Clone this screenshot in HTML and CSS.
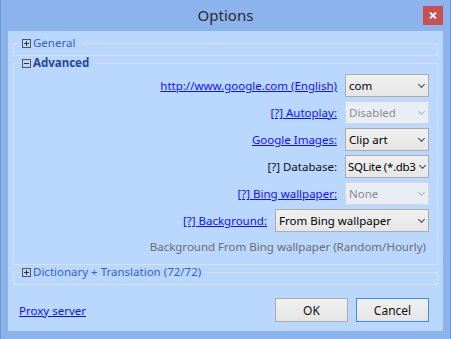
FILE: index.html
```html
<!DOCTYPE html>
<html lang="en">
<head>
    <meta charset="UTF-8">
    <title>Options</title>
    <link rel="stylesheet" href="styles.css">
</head>
<body>
    <div class="window">
        <div class="titlebar">
            <span class="title">Options</span>
            <button class="close-btn" aria-label="Close">
                <svg width="8" height="7" viewBox="0 0 8 7"><path d="M1 0.5 L7 6.5 M7 0.5 L1 6.5" stroke="#fff" stroke-width="1.8"/></svg>
            </button>
        </div>

        <div class="content">
            <fieldset class="group collapsed">
                <legend>
                    <svg class="toggle" width="9" height="9" viewBox="0 0 9 9"><rect x="0.5" y="0.5" width="8" height="8" fill="none" stroke="#555"/><path d="M2 4.5 H7 M4.5 2 V7" stroke="#333"/></svg>
                    <span class="group-name">General</span>
                </legend>
            </fieldset>

            <fieldset class="group open">
                <legend>
                    <svg class="toggle" width="9" height="9" viewBox="0 0 9 9"><rect x="0.5" y="0.5" width="8" height="8" fill="none" stroke="#555"/><path d="M2 4.5 H7" stroke="#333"/></svg>
                    <span class="group-name bold">Advanced</span>
                </legend>

                <div class="rows">
                    <div class="row">
                        <a href="#" class="label-link">http://www.google.com (English)</a>
                        <div class="select small"><span>com</span><i class="arrow"></i></div>
                    </div>
                    <div class="row">
                        <a href="#" class="label-link">[?] Autoplay:</a>
                        <div class="select small disabled"><span>Disabled</span><i class="arrow"></i></div>
                    </div>
                    <div class="row">
                        <a href="#" class="label-link">Google Images:</a>
                        <div class="select small"><span>Clip art</span><i class="arrow"></i></div>
                    </div>
                    <div class="row">
                        <span class="label">[?] Database:</span>
                        <div class="select small tight"><span>SQLite (*.db3</span><i class="arrow"></i></div>
                    </div>
                    <div class="row">
                        <a href="#" class="label-link">[?] Bing wallpaper:</a>
                        <div class="select small disabled"><span>None</span><i class="arrow"></i></div>
                    </div>
                    <div class="row">
                        <a href="#" class="label-link">[?] Background:</a>
                        <div class="select wide"><span>From Bing wallpaper</span><i class="arrow"></i></div>
                    </div>
                </div>
                <p class="hint">Background From Bing wallpaper (Random/Hourly)</p>
            </fieldset>

            <fieldset class="group collapsed">
                <legend>
                    <svg class="toggle" width="9" height="9" viewBox="0 0 9 9"><rect x="0.5" y="0.5" width="8" height="8" fill="none" stroke="#555"/><path d="M2 4.5 H7 M4.5 2 V7" stroke="#333"/></svg>
                    <span class="group-name">Dictionary + Translation (72/72)</span>
                </legend>
            </fieldset>

            <div class="footer">
                <a href="#" class="proxy">Proxy server</a>
                <div class="buttons">
                    <button class="btn">OK</button>
                    <button class="btn focused">Cancel</button>
                </div>
            </div>
        </div>
    </div>
</body>
</html>
```

FILE: styles.css
```css
:root {
    --frame: #8cb3eb;
    --frame-edge: #6e97d3;
    --panel: #bad7fd;
    --group-line: #d9e2ea;
    --link: #1010ff;
    --header-blue: #3960c4;
    --header-dark: #28469e;
}

* {
    box-sizing: border-box;
    margin: 0;
    padding: 0;
}

body {
    font-family: "Noto Sans", "Open Sans", sans-serif;
    font-size: 11.5px;
    background: var(--frame);
    color: #111;
}

.window {
    width: 451px;
    height: 339px;
    background: var(--frame);
    border-left: 1px solid var(--frame-edge);
    border-right: 1px solid var(--frame-edge);
    display: flex;
    flex-direction: column;
    padding: 0 7px 8px;
}

.titlebar {
    height: 31px;
    display: flex;
    align-items: center;
    justify-content: center;
    position: relative;
}

.title {
    font-size: 15px;
    color: #2b2b2b;
    margin-top: -1px;
}

.close-btn {
    position: absolute;
    right: 0;
    top: 6px;
    width: 20px;
    height: 19px;
    border: none;
    background: #c75050;
    display: flex;
    align-items: center;
    justify-content: center;
}

.content {
    flex: 1;
    background: var(--panel);
    display: flex;
    flex-direction: column;
}

.group {
    margin: 0 5px;
    border: 1px solid var(--group-line);
    padding: 0 8px 5px;
}

.group:first-child {
    margin-top: 5px;
}

.group legend {
    display: flex;
    align-items: center;
    height: 14px;
    padding: 0 6px 0 0;
    line-height: 14px;
}

.toggle {
    display: block;
    margin-right: 2px;
}

.group-name {
    color: var(--header-blue);
}

.group-name.bold {
    font-weight: bold;
    color: var(--header-dark);
}

.rows {
    display: flex;
    flex-direction: column;
    gap: 4px;
    padding-top: 4px;
}

.row {
    display: flex;
    justify-content: flex-end;
    align-items: center;
    gap: 8px;
    height: 23px;
}

.label-link,
.proxy {
    color: var(--link);
    text-decoration: underline;
}

.label {
    color: #111;
}

.select {
    height: 23px;
    border: 1px solid #acacac;
    background: linear-gradient(#f0f0f0, #e6e6e6);
    display: flex;
    align-items: center;
    padding-left: 3px;
    overflow: hidden;
    color: #000;
    white-space: nowrap;
}

.select.small {
    width: 84px;
}

.select.wide {
    width: 154px;
}

.select span {
    flex: 1;
    overflow: hidden;
}

.select.tight {
    padding-left: 2px;
    letter-spacing: -0.3px;
}

.select.tight .arrow {
    width: 11px;
}

.select.disabled {
    background: #e9eef5;
    border-color: #d4d8dd;
    color: #8b8b8b;
}

.arrow {
    width: 13px;
    height: 21px;
    flex: none;
    display: flex;
    align-items: center;
    justify-content: center;
}

.arrow::after {
    content: "";
    width: 4px;
    height: 4px;
    border-right: 1.5px solid #444;
    border-bottom: 1.5px solid #444;
    transform: rotate(45deg);
    margin-top: -3px;
}

.select.disabled .arrow::after {
    border-color: #b4b4b4;
}

.hint {
    text-align: right;
    color: #6d6d6d;
    line-height: 16px;
    margin-top: 7px;
    padding-right: 3px;
    padding-bottom: 4px;
}

.footer {
    margin-top: 13px;
    padding: 0 14px 0 11px;
    display: flex;
    align-items: center;
    justify-content: space-between;
}

.buttons {
    display: flex;
    gap: 8px;
}

.btn {
    width: 73px;
    height: 24px;
    font-family: inherit;
    font-size: 12px;
    color: #111;
    border: 1px solid #acacac;
    background: linear-gradient(#f0f0f0, #e5e5e5);
}

.btn.focused {
    border-color: #3c8fe8;
}
```
